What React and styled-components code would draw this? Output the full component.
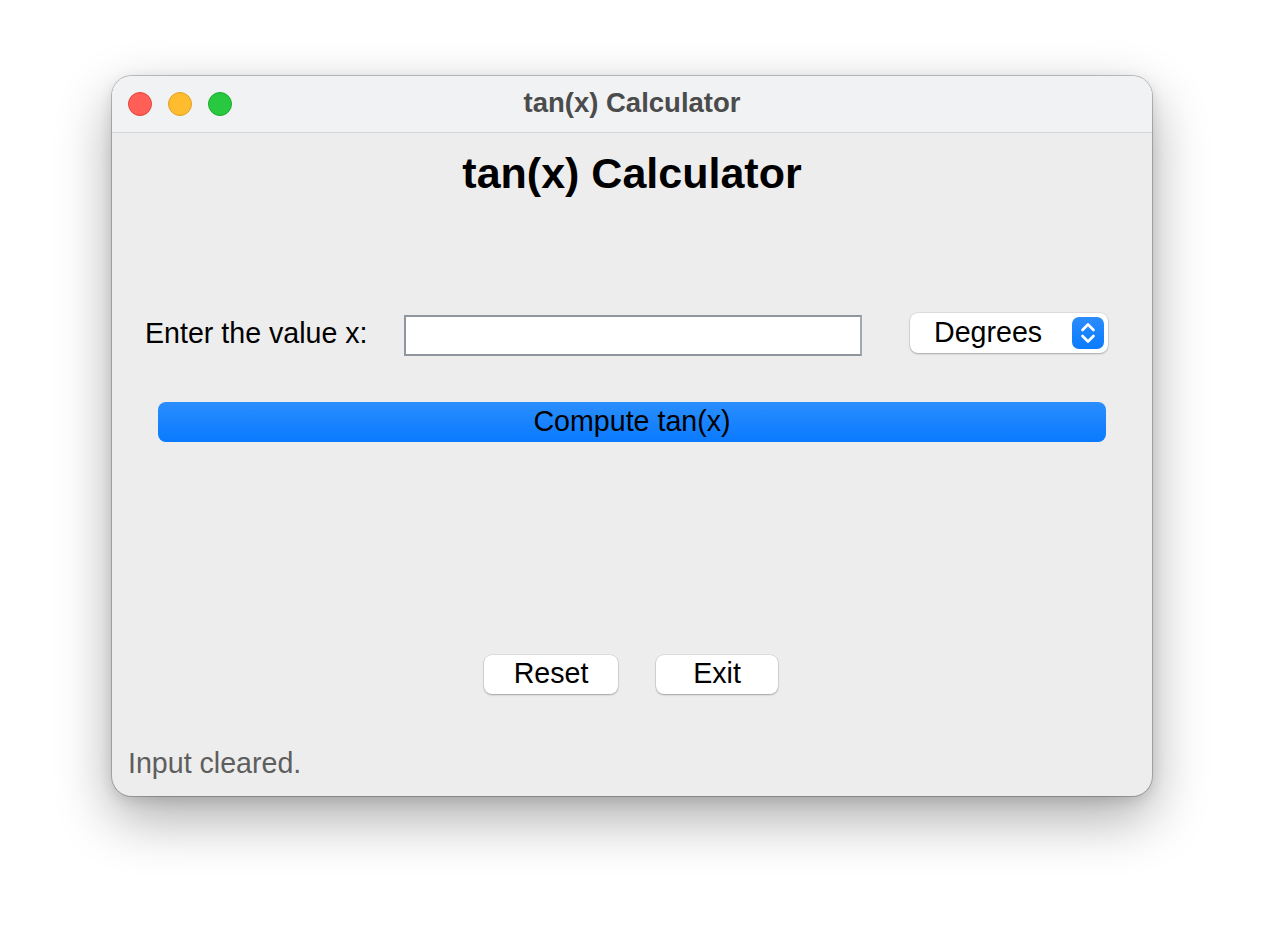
import React, { useState } from 'react';
import styled, { createGlobalStyle } from 'styled-components';

const GlobalStyle = createGlobalStyle`
  html, body {
    margin: 0;
    padding: 0;
    background: #ffffff;
  }
  body {
    font-family: "Liberation Sans", Arial, sans-serif;
  }
`;

const Desktop = styled.div`
  width: 1264px;
  height: 944px;
  display: flex;
  justify-content: center;
  align-items: flex-start;
  padding-top: 76px;
  box-sizing: border-box;
`;

const Window = styled.div`
  width: 1040px;
  height: 720px;
  border-radius: 20px;
  background: #ededed;
  box-shadow: 0 0 0 1px rgba(0, 0, 0, 0.22), 0 22px 55px rgba(0, 0, 0, 0.33),
    0 4px 14px rgba(0, 0, 0, 0.12);
  overflow: hidden;
  display: flex;
  flex-direction: column;
`;

const TitleBar = styled.div`
  height: 56px;
  flex-shrink: 0;
  background: #f0f2f3;
  border-bottom: 1px solid #d2d4d6;
  display: flex;
  align-items: center;
  position: relative;
  padding-left: 16px;
`;

const Lights = styled.div`
  display: flex;
  gap: 16px;
`;

const Light = styled.span`
  width: 24px;
  height: 24px;
  border-radius: 50%;
  box-sizing: border-box;
  background: ${(p) => p.$fill};
  border: 1px solid ${(p) => p.$edge};
`;

const TitleText = styled.div`
  position: absolute;
  left: 0;
  right: 0;
  text-align: center;
  font-size: 27.5px;
  font-weight: bold;
  color: #4b4b4b;
  pointer-events: none;
  margin-top: -2px;
`;

const Body = styled.div`
  flex: 1;
  display: flex;
  flex-direction: column;
`;

const Heading = styled.h1`
  margin: 15px 0 0;
  font-size: 43px;
  line-height: 50px;
  font-weight: bold;
  text-align: center;
  color: #000;
`;

const InputRow = styled.div`
  margin-top: 114px;
  height: 43px;
  display: flex;
  align-items: center;
  padding: 0 44px 0 33px;
`;

const Label = styled.label`
  font-size: 28.6px;
  color: #000;
  width: 259px;
  flex-shrink: 0;
`;

const TextInput = styled.input`
  width: 458px;
  height: 41px;
  box-sizing: border-box;
  border: 2px solid #8f969e;
  border-right-color: #a3a9b0;
  background: #fff;
  font-family: "Liberation Sans", Arial, sans-serif;
  font-size: 26px;
  padding: 0 8px;
  outline: none;
  margin-top: 3px;
`;

const Select = styled.div`
  margin-left: auto;
  width: 198px;
  height: 40px;
  box-sizing: border-box;
  background: #fff;
  border-radius: 8px;
  box-shadow: 0 0 0 0.5px rgba(0, 0, 0, 0.12), 0 1px 2px rgba(0, 0, 0, 0.25);
  display: flex;
  align-items: center;
  padding: 0 4px 0 24px;
  margin-top: -2px;
`;

const SelectText = styled.span`
  font-size: 28.6px;
  color: #000;
  flex: 1;
`;

const Stepper = styled.span`
  width: 32px;
  height: 32px;
  border-radius: 7px;
  background: linear-gradient(#2b8cfd, #0a7bff);
  display: flex;
  align-items: center;
  justify-content: center;
`;

const ComputeButton = styled.button`
  margin: 47px 46px 0;
  height: 40px;
  border: none;
  border-radius: 8px;
  background: linear-gradient(#2a8efd, #0a7aff);
  font-family: "Liberation Sans", Arial, sans-serif;
  font-size: 28.6px;
  line-height: 36px;
  color: #000;
  cursor: pointer;
  padding: 0 0 2px;
`;

const ButtonRow = styled.div`
  margin-top: 213px;
  display: flex;
  justify-content: center;
  gap: 38px;
  padding-right: 2px;
`;

const PlainButton = styled.button`
  width: ${(p) => p.$w}px;
  height: 39px;
  border: none;
  border-radius: 8px;
  background: #fff;
  box-shadow: 0 0 0 0.5px rgba(0, 0, 0, 0.12), 0 1px 2px rgba(0, 0, 0, 0.28);
  font-family: "Liberation Sans", Arial, sans-serif;
  font-size: 28.6px;
  line-height: 34px;
  color: #000;
  padding: 0 0 3px;
  cursor: pointer;
`;

const Status = styled.div`
  margin-top: 52px;
  padding-left: 16px;
  font-size: 28.6px;
  line-height: 34px;
  color: #5e5e5e;
`;

function ChevronsIcon() {
  return (
    <svg width="20" height="26" viewBox="0 0 20 26" fill="none">
      <path
        d="M4.5 10 L10 4.5 L15.5 10"
        stroke="#fff"
        strokeWidth="2.6"
        strokeLinecap="round"
        strokeLinejoin="round"
      />
      <path
        d="M4.5 16 L10 21.5 L15.5 16"
        stroke="#fff"
        strokeWidth="2.6"
        strokeLinecap="round"
        strokeLinejoin="round"
      />
    </svg>
  );
}

export default function App() {
  const [value, setValue] = useState('');
  const [status, setStatus] = useState('Input cleared.');

  return (
    <>
      <GlobalStyle />
      <Desktop>
        <Window>
          <TitleBar>
            <Lights>
              <Light $fill="#ff5f57" $edge="#e0443e" />
              <Light $fill="#febc2e" $edge="#dea123" />
              <Light $fill="#28c840" $edge="#1aab29" />
            </Lights>
            <TitleText>tan(x) Calculator</TitleText>
          </TitleBar>
          <Body>
            <Heading>tan(x) Calculator</Heading>
            <InputRow>
              <Label>Enter the value x:</Label>
              <TextInput value={value} onChange={(e) => setValue(e.target.value)} />
              <Select>
                <SelectText>Degrees</SelectText>
                <Stepper>
                  <ChevronsIcon />
                </Stepper>
              </Select>
            </InputRow>
            <ComputeButton>Compute tan(x)</ComputeButton>
            <ButtonRow>
              <PlainButton
                $w={134}
                onClick={() => {
                  setValue('');
                  setStatus('Input cleared.');
                }}
              >
                Reset
              </PlainButton>
              <PlainButton $w={122}>Exit</PlainButton>
            </ButtonRow>
            <Status>{status}</Status>
          </Body>
        </Window>
      </Desktop>
    </>
  );
}
